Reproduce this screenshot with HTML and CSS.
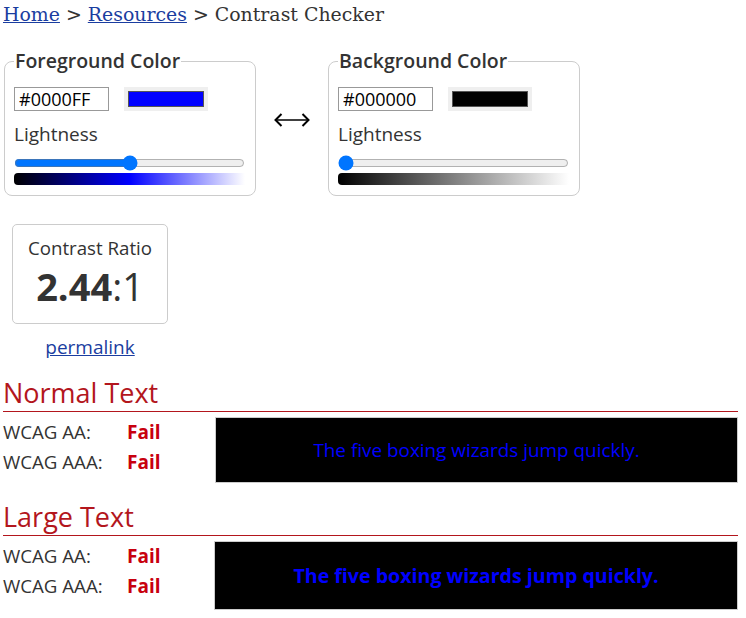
FILE: index.html
```html
<!DOCTYPE html>
<html>
<head>
<meta charset="utf-8">
<link rel="stylesheet" href="styles.css">
</head>
<body>
<nav class="crumbs"><a href="#">Home</a> &gt; <a href="#">Resources</a> &gt; Contrast Checker</nav>

<div class="pickers">
  <fieldset class="picker">
    <legend>Foreground Color</legend>
    <div class="inrow">
      <input class="hex" type="text" value="#0000FF">
      <span class="swatch"><span class="sw-inner" style="background:#0000ff"></span></span>
    </div>
    <label class="lbl">Lightness</label>
    <input class="range" type="range" min="0" max="100" value="50">
    <div class="grad grad-fg"></div>
  </fieldset>
  <div class="swap" title="Swap colors">
    <svg width="36" height="14" viewBox="0 0 36 14" aria-label="&#8596;">
      <path d="M1.5 7 H34.5" stroke="#000" stroke-width="1.6" fill="none"/>
      <path d="M7.5 1 L1.5 7 L7.5 13" stroke="#000" stroke-width="2" fill="none" stroke-linejoin="miter"/>
      <path d="M28.5 1 L34.5 7 L28.5 13" stroke="#000" stroke-width="2" fill="none" stroke-linejoin="miter"/>
    </svg>
  </div>
  <fieldset class="picker">
    <legend>Background Color</legend>
    <div class="inrow">
      <input class="hex" type="text" value="#000000">
      <span class="swatch"><span class="sw-inner" style="background:#000000"></span></span>
    </div>
    <label class="lbl">Lightness</label>
    <input class="range" type="range" min="0" max="100" value="0">
    <div class="grad grad-bg"></div>
  </fieldset>
</div>

<div class="ratio-wrap">
  <div class="ratio">
    <div class="ratio-title">Contrast Ratio</div>
    <div class="ratio-val"><b>2.44</b>:1</div>
  </div>
  <a class="perma" href="#">permalink</a>
</div>

<section class="sec">
  <h2>Normal Text</h2>
  <div class="res">
    <div class="grades">
      <div class="g"><span class="gl">WCAG AA:</span><span class="fail">Fail</span></div>
      <div class="g"><span class="gl">WCAG AAA:</span><span class="fail">Fail</span></div>
    </div>
    <div class="sample">The five boxing wizards jump quickly.</div>
  </div>
</section>

<section class="sec sec-large">
  <h2>Large Text</h2>
  <div class="res">
    <div class="grades">
      <div class="g"><span class="gl">WCAG AA:</span><span class="fail">Fail</span></div>
      <div class="g"><span class="gl">WCAG AAA:</span><span class="fail">Fail</span></div>
    </div>
    <div class="sample sample-large">The five boxing wizards jump quickly.</div>
  </div>
</section>
</body>
</html>
```
FILE: styles.css
```css
html, body { margin: 0; padding: 0; background: #fff; }
body {
  padding: 0 8px 0 3px;
  font-family: "Open Sans", sans-serif;
  color: #333;
}
.crumbs {
  font-family: "DejaVu Serif", serif;
  font-size: 18.9px;
  color: #333;
  line-height: 26px;
  padding-top: 1px;
}
.crumbs a { color: #1a3da0; }

.pickers {
  display: flex;
  align-items: center;
  margin-top: 22px;
}
.picker {
  margin: 0;
  margin-left: 1px;
  width: 252px;
  box-sizing: border-box;
  border: 1px solid #ccc;
  border-radius: 8px;
  padding: 14px 9px 10px 9px;
}
.picker legend {
  font-size: 19.5px;
  font-weight: 600;
  padding: 0 1px;
  margin-left: 0;
  line-height: 24px;
}
.swap {
  width: 71px;
  display: flex;
  justify-content: center;
  margin-top: -5px;
}
.swap svg { display: block; margin-left: 0; }
.inrow { display: flex; align-items: center; gap: 15px; }
.hex {
  width: 95px; height: 24px; box-sizing: border-box;
  border: 1px solid #999;
  font-family: "Open Sans", sans-serif;
  font-size: 18px;
  padding: 0 4px;
  color: #000;
  margin: 0;
}
.swatch {
  display: block;
  width: 84px; height: 24px; box-sizing: border-box;
  background: #efefef;
  padding: 4px;
}
.sw-inner { display: block; width: 100%; height: 100%; box-sizing: border-box; border: 1px solid #555; }
.lbl { display: block; font-size: 19px; line-height: 26px; margin-top: 10px; }
.range { display: block; width: 231px; margin: 8px 0 0 0; height: 16px; accent-color: #0075ff; }
.grad { height: 12px; width: 231px; margin-top: 2px; border-radius: 4px 0 0 4px; }
.grad-fg { background: linear-gradient(to right, #000 0%, #0000ff 50%, #fff 100%); }
.grad-bg { background: linear-gradient(to right, #000 0%, #fff 100%); }

.ratio-wrap { width: 156px; margin: 28px 0 0 9px; text-align: center; }
.ratio {
  border: 1px solid #ccc; border-radius: 5px;
  height: 100px; box-sizing: border-box;
  padding-top: 10px;
}
.ratio-title { font-size: 18.7px; line-height: 26px; }
.ratio-val { font-size: 38px; line-height: 50px; }
.ratio-val b { font-weight: 700; }
.perma { display: inline-block; margin-top: 10px; font-size: 19px; color: #1a3da0; }

.sec h2 {
  font-weight: 400;
  font-size: 27px;
  color: #b3161d;
  margin: 0;
  line-height: 34px;
  border-bottom: 1px solid #b3161d;
  padding-bottom: 1px;
  padding-top: 1px;
}
.sec { margin-top: 15px; }
.sec-large { margin-top: 16px; }
.res { display: flex; align-items: flex-start; margin-top: 5px; }
.grades { width: 212px; flex: none; font-size: 18.7px; }
.g { display: flex; line-height: 30px; }
.gl { width: 124px; }
.fail { color: #c8000e; font-weight: 700; font-size: 19px; }
.sample {
  flex: 1;
  background: #000;
  border: 1px solid #ccc;
  color: #0000ff;
  text-align: center;
  font-size: 18.9px;
  height: 66px;
  line-height: 64px;
  box-sizing: border-box;
  margin-left: 0;
}
.sample-large { font-weight: 700; font-size: 19.6px; height: 69px; line-height: 67px; margin-left: -1px; }
```
